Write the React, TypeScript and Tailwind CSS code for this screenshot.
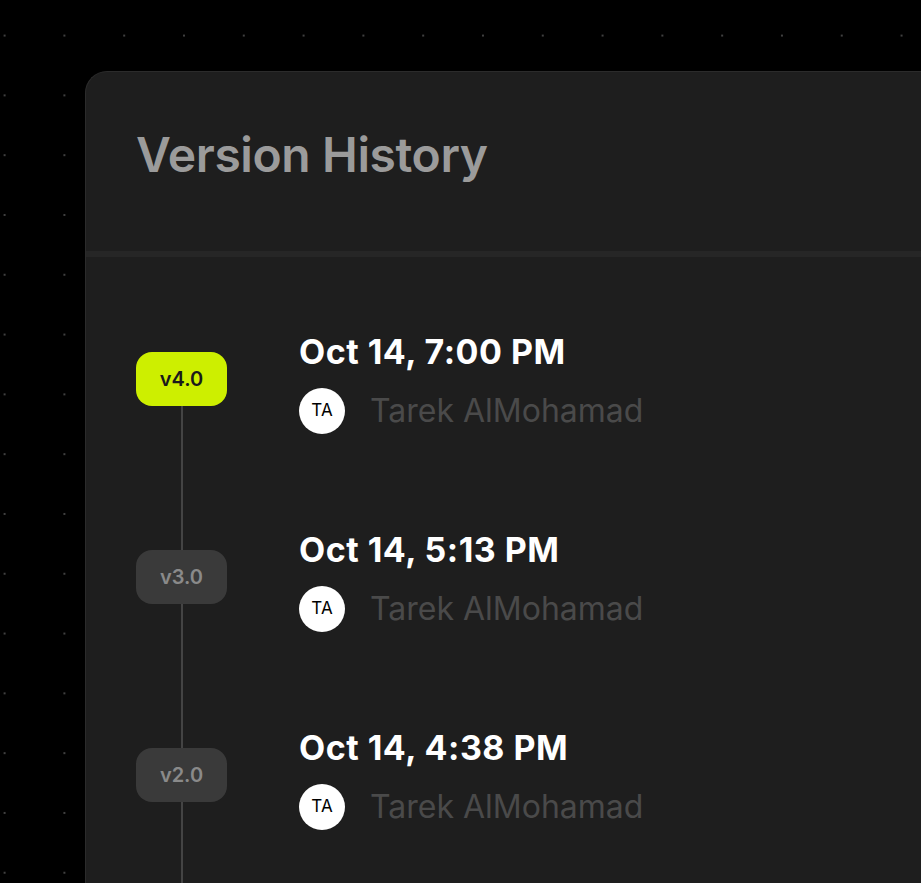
import React from "react";

const versions = [
  { v: "v4.0", date: "Oct 14, 7:00 PM", active: true },
  { v: "v3.0", date: "Oct 14, 5:13 PM", active: false },
  { v: "v2.0", date: "Oct 14, 4:38 PM", active: false },
];

export default function App() {
  return (
    <div
      className="h-[883px] w-[921px] overflow-hidden bg-black [background-image:radial-gradient(circle,#404040_1px,transparent_1.5px)] [background-size:59.8px_59.8px] [background-position:-25.3px_5.7px]"
      style={{ fontFamily: "Inter, 'Noto Sans', sans-serif" }}
    >
      <div className="ml-[85px] mt-[71px] w-[900px] h-[900px] rounded-tl-[22px] border-l border-t border-[#2b2b2b] bg-[#1e1e1e]">
        <div className="h-[179px] pl-[50px] pt-[55px]">
          <h1 className="text-[48px] leading-[56px] font-semibold text-[#9b9b9b] tracking-[-0.4px]">
            Version History
          </h1>
        </div>
        <div className="h-[6px] bg-[#262626]" />
        <div className="pl-[50px] pt-[75px]">
          {versions.map((item, i) => (
            <div key={item.v} className="flex h-[198px]">
              <div className="flex w-[91px] flex-col items-center">
                <div className={`h-[20px] w-[2px] ${i === 0 ? "bg-transparent" : "bg-[#444444]"}`} />
                <div
                  className={`flex h-[54px] w-[91px] items-center justify-center rounded-[16px] text-[20px] font-semibold ${
                    item.active ? "bg-[#cdef00] text-[#1a1a1a]" : "bg-[#3a3a3a] text-[#8a8a8a]"
                  }`}
                >
                  {item.v}
                </div>
                <div className="w-[2px] flex-1 bg-[#444444]" />
              </div>
              <div className="ml-[72px] flex flex-col">
                <div className="text-[34px] leading-[40px] font-bold tracking-[0.5px] text-white">
                  {item.date}
                </div>
                <div className="mt-[16px] flex items-center gap-[25px]">
                  <div className="flex h-[46px] w-[46px] items-center justify-center rounded-full bg-white text-[17px] font-normal text-black">
                    TA
                  </div>
                  <div className="text-[32px] leading-[40px] text-[#4a4a4a]">Tarek AlMohamad</div>
                </div>
              </div>
            </div>
          ))}
        </div>
      </div>
    </div>
  );
}
